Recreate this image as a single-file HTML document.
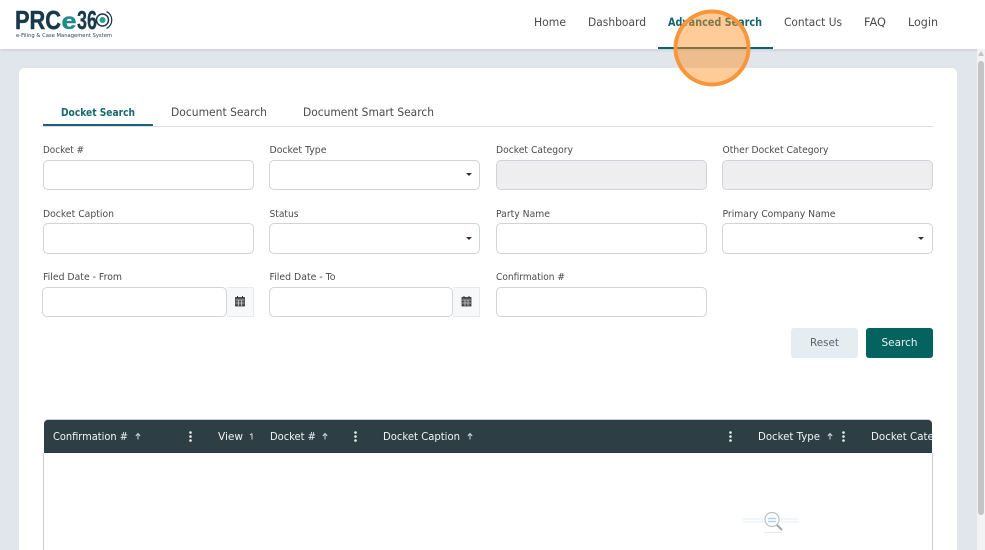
<!DOCTYPE html>
<html lang="en"><head><meta charset="utf-8"><title>PRCe360 Advanced Search</title>
<style>
html,body{margin:0;padding:0;width:985px;height:550px;overflow:hidden;background:#e1e6ed;font-family:"DejaVu Sans","Liberation Sans",sans-serif}
#p{position:relative;width:985px;height:550px;overflow:hidden}
.a{position:absolute;box-sizing:border-box}
.i{position:absolute;box-sizing:border-box;height:30px;width:211px;background:#fff;border:1px solid #ced4da;border-radius:5px}
.d{background:#eee}
.ad{position:absolute;box-sizing:border-box;width:27px;height:30px;background:#f7f8f9;border:1px solid #e8ebee;border-left:0}
svg{position:absolute;left:0;top:0}
.l{font-size:9.500px;fill:#4a4a4a}
.n{font-size:11.500px;fill:#4a4a4a}
.h{font-size:11px;fill:#f2f5f5}
</style></head><body><div id="p">
<div class="a" style="left:0;top:0;width:985px;height:49px;background:#fff;box-shadow:0 1px 3px rgba(0,0,0,.12)"></div>
<div class="a" style="left:977px;top:49px;width:8px;height:501px;background:#f3f3f3"></div>
<div class="a" style="left:978px;top:61px;width:6px;height:454px;background:#c4c4c4;border-radius:3px"></div>
<div class="a" style="left:19px;top:68px;width:938px;height:482px;background:#fff;border-radius:5px 5px 0 0"></div>
<div class="a" style="left:658px;top:47px;width:115px;height:2px;background:#13606a"></div>
<div class="a" style="left:43px;top:126px;width:890px;height:1px;background:#ddd"></div>
<div class="a" style="left:43px;top:124px;width:110px;height:2px;background:#1f5d7c"></div>

<div class="i" style="left:43px;top:160px"></div>
<div class="i" style="left:269px;top:160px"></div>
<div class="i d" style="left:496px;top:160px"></div>
<div class="i d" style="left:722px;top:160px"></div>
<div class="i" style="left:43px;top:223px;height:31px"></div>
<div class="i" style="left:269px;top:223px;height:31px"></div>
<div class="i" style="left:496px;top:223px;height:31px"></div>
<div class="i" style="left:722px;top:223px;height:31px"></div>
<div class="i" style="left:42px;top:287px;width:185px"></div>
<div class="ad" style="left:227px;top:287px"></div>
<div class="i" style="left:269px;top:287px;width:184px"></div>
<div class="ad" style="left:453px;top:287px"></div>
<div class="i" style="left:496px;top:287px"></div>

<div class="a" style="left:791px;top:328px;width:67px;height:30px;background:#e6edf0;border-radius:3px"></div>
<div class="a" style="left:866px;top:328px;width:67px;height:30px;background:#04625f;border-radius:3px"></div>

<div class="a" style="left:43px;top:453px;width:890px;height:97px;border-left:1px solid #ccc;border-right:1px solid #ccc"></div>
<div class="a" style="left:44px;top:420px;width:888px;height:33px;background:#2d3e44;border-radius:4px 4px 0 0;box-shadow:0 -1px 0 #c5d0d4"></div>

<svg width="985" height="550" viewBox="0 0 985 550" xmlns="http://www.w3.org/2000/svg">
<defs><clipPath id="c"><rect x="44" y="420" width="888" height="33"/></clipPath></defs>
<!-- logo -->
<g font-family="'Liberation Sans',sans-serif" font-weight="bold">
<text x="15" y="29" font-size="26" fill="#17394a" stroke="#17394a" stroke-width=".5" textLength="46" lengthAdjust="spacingAndGlyphs">PRC</text>
<text x="61.500" y="29" font-size="23" fill="#1f8b8b" stroke="#1f8b8b" stroke-width=".4" textLength="15" lengthAdjust="spacingAndGlyphs">e</text>
<text x="77" y="29" font-size="26" fill="#17394a" stroke="#17394a" stroke-width=".3" textLength="20" lengthAdjust="spacingAndGlyphs">36</text>
</g>
<g fill="none">
<circle cx="102.500" cy="20" r="3" fill="#2a9d96"/>
<circle cx="102.500" cy="20" r="6" stroke="#17394a" stroke-width="1.500"/>
<path d="M106.500 11.500A9.500 9.500 0 0 1 106.500 28.500" stroke="#17394a" stroke-width="1.300"/>
</g>
<text x="16" y="37" font-size="5.500" fill="#2b4452" textLength="96" lengthAdjust="spacingAndGlyphs">e-Filing &amp; Case Management System</text>
<!-- nav -->
<text class="n" x="534" y="26" textLength="32" lengthAdjust="spacingAndGlyphs">Home</text>
<text class="n" x="588" y="26" textLength="58" lengthAdjust="spacingAndGlyphs">Dashboard</text>
<text class="n" x="668" y="26" font-weight="bold" style="fill:#13656b" textLength="94" lengthAdjust="spacingAndGlyphs">Advanced Search</text>
<text class="n" x="784" y="26" textLength="58" lengthAdjust="spacingAndGlyphs">Contact Us</text>
<text class="n" x="864" y="26" textLength="22" lengthAdjust="spacingAndGlyphs">FAQ</text>
<text class="n" x="908" y="26" textLength="30" lengthAdjust="spacingAndGlyphs">Login</text>
<!-- tabs -->
<text x="61" y="116" font-size="11" font-weight="bold" fill="#17686c" textLength="74" lengthAdjust="spacingAndGlyphs">Docket Search</text>
<text class="n" x="171" y="116" textLength="96" lengthAdjust="spacingAndGlyphs">Document Search</text>
<text class="n" x="303" y="116" textLength="131" lengthAdjust="spacingAndGlyphs">Document Smart Search</text>
<!-- labels -->
<text class="l" x="43" y="153" textLength="41" lengthAdjust="spacingAndGlyphs">Docket #</text>
<text class="l" x="269.500" y="153" textLength="57" lengthAdjust="spacingAndGlyphs">Docket Type</text>
<text class="l" x="496" y="153" textLength="77" lengthAdjust="spacingAndGlyphs">Docket Category</text>
<text class="l" x="722.500" y="153" textLength="106" lengthAdjust="spacingAndGlyphs">Other Docket Category</text>
<text class="l" x="43" y="217" textLength="71" lengthAdjust="spacingAndGlyphs">Docket Caption</text>
<text class="l" x="269.500" y="217" textLength="29" lengthAdjust="spacingAndGlyphs">Status</text>
<text class="l" x="496" y="217" textLength="54" lengthAdjust="spacingAndGlyphs">Party Name</text>
<text class="l" x="722.500" y="217" textLength="113" lengthAdjust="spacingAndGlyphs">Primary Company Name</text>
<text class="l" x="43" y="280" textLength="79" lengthAdjust="spacingAndGlyphs">Filed Date - From</text>
<text class="l" x="269.500" y="280" textLength="66" lengthAdjust="spacingAndGlyphs">Filed Date - To</text>
<text class="l" x="496" y="280" textLength="69" lengthAdjust="spacingAndGlyphs">Confirmation #</text>
<!-- carets -->
<path d="M466 173h6l-3 3z" fill="#333"/>
<path d="M466 237h6l-3 3z" fill="#333"/>
<path d="M918 237h6l-3 3z" fill="#333"/>
<!-- calendars -->
<g fill="none" stroke="#333">
<rect x="235.500" y="297.500" width="9" height="8.500" fill="#555" stroke="#333" stroke-width=".8"/>
<path d="M235.500 300h9M238.500 300v6M241.500 300v6M235.500 303h9" stroke="#eee" stroke-width=".6"/>
<path d="M237.500 296v2M242.500 296v2" stroke-width="1"/>
</g>
<g fill="none" stroke="#333">
<rect x="462" y="297.500" width="9" height="8.500" fill="#555" stroke="#333" stroke-width=".8"/>
<path d="M462 300h9M465 300v6M468 300v6M462 303h9" stroke="#eee" stroke-width=".6"/>
<path d="M464 296v2M469 296v2" stroke-width="1"/>
</g>
<!-- buttons -->
<text x="810" y="346" font-size="11" fill="#5a6468" textLength="29" lengthAdjust="spacingAndGlyphs">Reset</text>
<text x="881.500" y="346" font-size="11" fill="#e8f3f2" textLength="36" lengthAdjust="spacingAndGlyphs">Search</text>
<!-- table header -->
<g clip-path="url(#c)">
<text class="h" x="53" y="440" textLength="75" lengthAdjust="spacingAndGlyphs">Confirmation #</text>
<text class="h" x="218" y="440" textLength="25" lengthAdjust="spacingAndGlyphs">View</text>
<text class="h" x="270" y="440" textLength="46" lengthAdjust="spacingAndGlyphs">Docket #</text>
<text class="h" x="383" y="440" textLength="77" lengthAdjust="spacingAndGlyphs">Docket Caption</text>
<text class="h" x="758" y="440" textLength="62" lengthAdjust="spacingAndGlyphs">Docket Type</text>
<text class="h" x="871" y="440" textLength="86" lengthAdjust="spacingAndGlyphs">Docket Category</text>
</g>
<g fill="none" stroke="#cfd6d8" stroke-width="1">
<path d="M138 439.500v-6M135.800 436l2.200-2.500 2.200 2.500"/>
<path d="M252 439.500v-6M250 435l2-1.500"/>
<path d="M325 439.500v-6M322.800 436l2.200-2.500 2.200 2.500"/>
<path d="M470 439.500v-6M467.800 436l2.200-2.500 2.200 2.500"/>
<path d="M830 439.500v-6M827.800 436l2.200-2.500 2.200 2.500"/>
</g>
<g fill="#eef1f1">
<circle cx="190.500" cy="432.500" r="1.300"/><circle cx="190.500" cy="436.500" r="1.300"/><circle cx="190.500" cy="440.500" r="1.300"/>
<circle cx="355.500" cy="432.500" r="1.300"/><circle cx="355.500" cy="436.500" r="1.300"/><circle cx="355.500" cy="440.500" r="1.300"/>
<circle cx="730.500" cy="432.500" r="1.300"/><circle cx="730.500" cy="436.500" r="1.300"/><circle cx="730.500" cy="440.500" r="1.300"/>
<circle cx="843.500" cy="432.500" r="1.300"/><circle cx="843.500" cy="436.500" r="1.300"/><circle cx="843.500" cy="440.500" r="1.300"/>
</g>
<!-- empty state -->
<g fill="none">
<path d="M743 519h22M781 519h18M743 522h22M781 522h18" stroke="#eef3f6" stroke-width="1.500"/>
<circle cx="772" cy="519.500" r="7" fill="#fff" stroke="#b5c4cc" stroke-width="1.200"/>
<path d="M768 518.500h8M768 521.500h8" stroke="#a9d4e8" stroke-width="1.500"/>
<path d="M777 525l5 5" stroke="#9aa8b0" stroke-width="2"/>
<path d="M764 532.500h18" stroke="#e6eaed" stroke-width="1"/>
</g>
<!-- scrollbar arrow -->
<path d="M981 51l3 5h-6z" fill="#c4c4c4"/>
<!-- highlight -->
<circle cx="712" cy="48" r="36.500" fill="#ff8c1a" fill-opacity=".45" stroke="#f7963a" stroke-width="4"/>
</svg>
</div></body></html>
